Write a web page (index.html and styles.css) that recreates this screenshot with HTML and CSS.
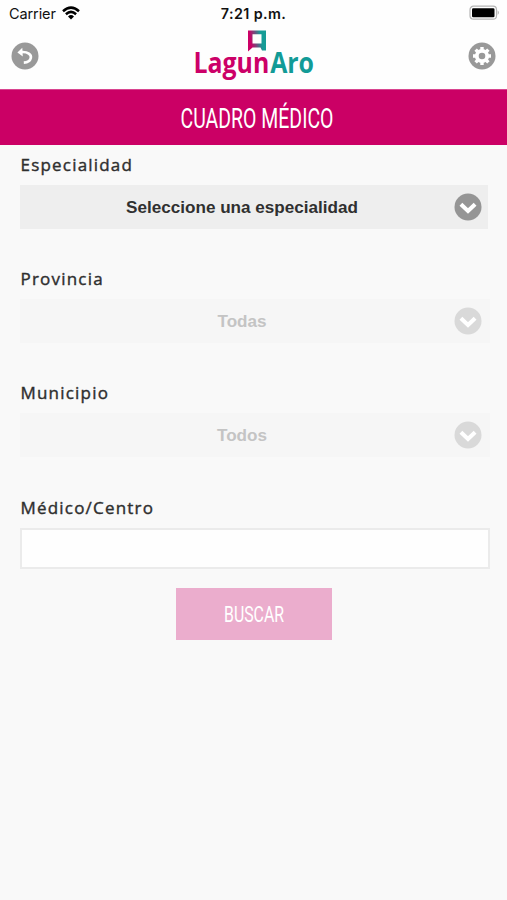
FILE: index.html
```html
<!DOCTYPE html>
<html lang="es">
<head>
<meta charset="utf-8">
<title>Cuadro médico</title>
<link rel="stylesheet" href="styles.css">
</head>
<body>
<header class="top">
  <div class="status">
    <div class="carrier">Carrier
      <svg class="wifi" width="18" height="14" viewBox="0 0 18 14"><g fill="none" stroke="#000" stroke-width="2.5"><path d="M1 5.2Q9-2 17 5.2"/><path d="M3.9 8.2Q9 3.6 14.1 8.2"/></g><path d="M6 10.4Q9 7.8 12 10.4L9 13.5Z"/></svg>
    </div>
    <div class="time">7:21 p.m.</div>
    <svg class="battery" width="32" height="16" viewBox="0 0 32 16"><rect x="1" y="1.2" width="26.5" height="13" rx="3.5" fill="#fff" stroke="#b5b5b5" stroke-width="1.2"/><rect x="3" y="3.2" width="22.5" height="9" rx="1.3"/><path d="M28.7 5.3Q31 7.7 28.7 10Z" fill="#aaa"/></svg>
  </div>
  <nav class="bar">
    <svg class="round" viewBox="0 0 28 28"><circle cx="14" cy="14" r="13.5" fill="#999"/><path d="M10 10.1C17 9.5 20.6 12.5 19.8 16C19.2 18.8 16.5 20.4 12.8 20.6" fill="none" stroke="#fff" stroke-width="2.7"/><path d="M6.4 10.4L11.3 5.8L11.8 14.6Z" fill="#fff"/></svg>
    <svg class="logo" width="124" height="54" viewBox="0 0 124 54">
      <defs><linearGradient id="mark" x1="0" y1=".6" x2="1" y2=".4"><stop offset=".15" stop-color="#cc0066"/><stop offset=".75" stop-color="#159c96"/></linearGradient></defs>
      <path d="M56 2.5H74V22.5H70L68.5 19.5H60.5L56 23.5ZM60.5 6.2V15.5H69.5V6.2Z" fill="url(#mark)" fill-rule="evenodd"/>
      <text class="brand" x="1.5" y="45.3" textLength="120.5" lengthAdjust="spacingAndGlyphs"><tspan class="pink">Lagun</tspan><tspan class="teal" dx="1">Aro</tspan></text>
    </svg>
    <svg class="round" viewBox="0 0 28 28"><circle cx="14" cy="14" r="13.5" fill="#999"/><circle cx="14" cy="14" r="5.2" fill="none" stroke="#fff" stroke-width="3.8"/><g stroke="#fff" stroke-width="3.4"><path d="M14 5V8M14 20V23M5 14H8M20 14H23M7.6 7.6L9.8 9.8M18.2 18.2L20.4 20.4M7.6 20.4L9.8 18.2M18.2 9.8L20.4 7.6"/></g></svg>
  </nav>
</header>
<h1 class="title"><svg width="156" height="40" viewBox="0 0 156 40"><text x="4.5" y="30" textLength="153" lengthAdjust="spacingAndGlyphs">CUADRO MÉDICO</text></svg></h1>
<main class="form">
  <section class="field">
    <label class="label">Especialidad</label>
    <div class="select"><span class="value">Seleccione una especialidad</span><svg class="round" viewBox="0 0 28 28"><circle cx="14" cy="14" r="13.5" fill="#959595"/><path d="M6.9 11.2L14 18L21.1 11.2" fill="none" stroke="#fff" stroke-width="4"/></svg></div>
  </section>
  <section class="field">
    <label class="label">Provincia</label>
    <div class="select off"><span class="value">Todas</span><svg class="round" viewBox="0 0 28 28"><circle cx="14" cy="14" r="13.5" fill="#d9d9d9"/><path d="M6.9 11.2L14 18L21.1 11.2" fill="none" stroke="#fff" stroke-width="4"/></svg></div>
  </section>
  <section class="field">
    <label class="label">Municipio</label>
    <div class="select off"><span class="value">Todos</span><svg class="round" viewBox="0 0 28 28"><circle cx="14" cy="14" r="13.5" fill="#d9d9d9"/><path d="M6.9 11.2L14 18L21.1 11.2" fill="none" stroke="#fff" stroke-width="4"/></svg></div>
  </section>
  <section class="field last">
    <label class="label" for="centro">Médico/Centro</label>
    <input class="input" id="centro" type="text">
  </section>
  <button class="search"><svg width="64" height="30" viewBox="0 0 64 30"><text x="2" y="23" textLength="60" lengthAdjust="spacingAndGlyphs">BUSCAR</text></svg></button>
</main>
</body>
</html>
```
FILE: styles.css
```css
* { box-sizing: border-box; }
body { margin: 0; min-height: 900px; background: #f9f9f9; color: #2f2f2f; font-family: "Liberation Sans", sans-serif; }
svg { display: block; flex: none; overflow: visible; }
.top { height: 89px; background: #fefefe; }
.status { display: grid; grid-template-columns: 1fr auto 1fr; align-items: center; height: 28px; padding: 0 6px 0 9px; font: 14.5px/28px Inter, sans-serif; color: #111; }
.carrier { display: flex; align-items: center; gap: 6px; letter-spacing: -.1px; }
.wifi { margin-top: -3px; }
.time { margin-right: 3px; font-weight: 600; font-size: 14.3px; letter-spacing: .4px; }
.battery { justify-self: end; margin-top: -2px; }
.bar { display: flex; justify-content: space-between; align-items: flex-start; padding: 0 11px; }
.round { width: 28px; height: 28px; }
.bar .round { margin-top: 14px; }
.brand { font: 700 28px "Open Sans", sans-serif; }
.pink { fill: #cc0068; }
.teal { fill: #129b97; }
.title { display: flex; justify-content: center; align-items: center; height: 56px; margin: 0; background: #cb0065; border-top: 1px solid #d94490; }
.title text { font: 400 27.5px Roboto, sans-serif; fill: #fff; }
.form { display: flex; flex-direction: column; padding: 8px 17px 0 20px; }
.field { height: 114.2px; }
.last { height: 94.4px; }
.label { display: block; height: 32px; padding-left: .5px; font: 400 17px/24px "Open Sans", sans-serif; letter-spacing: 1.2px; -webkit-text-stroke: .4px #2f2f2f; }
.select { display: flex; align-items: center; height: 44px; width: 468px; padding-right: 6px; background: #eee; font-size: 17.1px; font-weight: 700; }
.value { flex: 1; padding: 2px 0 0 10px; text-align: center; color: #303030; }
.off { width: 470px; padding-right: 8px; background: #f6f6f6; }
.off .value { color: #c4c4c4; }
.input { display: block; width: 470px; height: 41px; border: 2px solid #ebebeb; background: #fefefe; margin: 0; }
.search { display: grid; place-items: center; width: 156px; height: 52px; margin: -2px 0 0 156px; padding: 0; border: 0; background: #ebadcd; }
.search text { font: 400 22px Roboto, sans-serif; fill: #fff; }
```
